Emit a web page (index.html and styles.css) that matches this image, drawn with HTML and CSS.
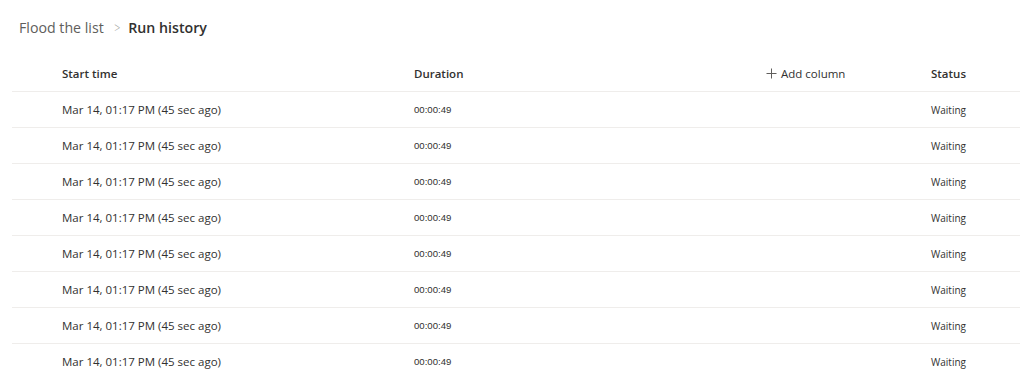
FILE: index.html
```html
<!DOCTYPE html>
<html lang="en">
<head>
<meta charset="utf-8">
<title>Run history</title>
<link rel="stylesheet" href="styles.css">
</head>
<body>
<div class="page">
  <nav class="breadcrumb">
    <span class="crumb">Flood the list</span>
    <span class="chev">&gt;</span>
    <span class="crumb current">Run history</span>
  </nav>
  <div class="table">
    <div class="row head">
      <div class="cell gutter"></div>
      <div class="cell">Start time</div>
      <div class="cell">Duration</div>
      <div class="cell add">
        <svg class="plus" width="11" height="11" viewBox="0 0 11 11"><path d="M5.5 0.5v10M0.5 5.5h10" stroke="#605e5c" stroke-width="1" fill="none"/></svg>
        <span>Add column</span>
      </div>
      <div class="cell">Status</div>
    </div>
    <div class="row"><div class="cell gutter"></div><div class="cell start">Mar 14, 01:17 PM (45 sec ago)</div><div class="cell dur">00:00:49</div><div class="cell"></div><div class="cell status">Waiting</div></div>
    <div class="row"><div class="cell gutter"></div><div class="cell start">Mar 14, 01:17 PM (45 sec ago)</div><div class="cell dur">00:00:49</div><div class="cell"></div><div class="cell status">Waiting</div></div>
    <div class="row"><div class="cell gutter"></div><div class="cell start">Mar 14, 01:17 PM (45 sec ago)</div><div class="cell dur">00:00:49</div><div class="cell"></div><div class="cell status">Waiting</div></div>
    <div class="row"><div class="cell gutter"></div><div class="cell start">Mar 14, 01:17 PM (45 sec ago)</div><div class="cell dur">00:00:49</div><div class="cell"></div><div class="cell status">Waiting</div></div>
    <div class="row"><div class="cell gutter"></div><div class="cell start">Mar 14, 01:17 PM (45 sec ago)</div><div class="cell dur">00:00:49</div><div class="cell"></div><div class="cell status">Waiting</div></div>
    <div class="row"><div class="cell gutter"></div><div class="cell start">Mar 14, 01:17 PM (45 sec ago)</div><div class="cell dur">00:00:49</div><div class="cell"></div><div class="cell status">Waiting</div></div>
    <div class="row"><div class="cell gutter"></div><div class="cell start">Mar 14, 01:17 PM (45 sec ago)</div><div class="cell dur">00:00:49</div><div class="cell"></div><div class="cell status">Waiting</div></div>
    <div class="row"><div class="cell gutter"></div><div class="cell start">Mar 14, 01:17 PM (45 sec ago)</div><div class="cell dur">00:00:49</div><div class="cell"></div><div class="cell status">Waiting</div></div>
  </div>
</div>
</body>
</html>
```

FILE: styles.css
```css
* { box-sizing: border-box; }
html, body {
  margin: 0;
  padding: 0;
  background: #ffffff;
  overflow: hidden;
}
body {
  font-family: "Open Sans", "Noto Sans", sans-serif;
  color: #323130;
}
.page {
  width: 1024px;
  height: 372px;
  padding: 0 4px 0 12px;
}
.breadcrumb {
  display: flex;
  align-items: center;
  height: 56px;
  padding: 0 0 2px 7px;
  font-size: 14.2px;
}
.crumb {
  color: #605e5c;
  font-weight: 400;
}
.chev {
  color: #a19f9d;
  font-size: 15px;
  font-weight: 300;
  margin: 0 7px 0 9px;
  transform: scaleX(0.7);
}
.crumb.current {
  color: #323130;
  font-weight: 600;
}
.table {
  display: flex;
  flex-direction: column;
}
.row {
  display: grid;
  grid-template-columns: 50px 352px 352px 165px 1fr;
  align-items: center;
  height: 36px;
  border-bottom: 1px solid #efedeb;
  font-size: 11.5px;
}
.row.head {
  font-weight: 600;
  font-size: 11.5px;
  color: #323130;
}
.cell {
  white-space: nowrap;
}
.add {
  display: flex;
  align-items: center;
  gap: 4px;
  font-weight: 400;
}
.plus { display: block; }
.dur {
  font-family: "Liberation Sans", Arial, sans-serif;
  font-size: 9.6px;
  color: #323130;
}
.status {
  font-size: 10px;
}
```
